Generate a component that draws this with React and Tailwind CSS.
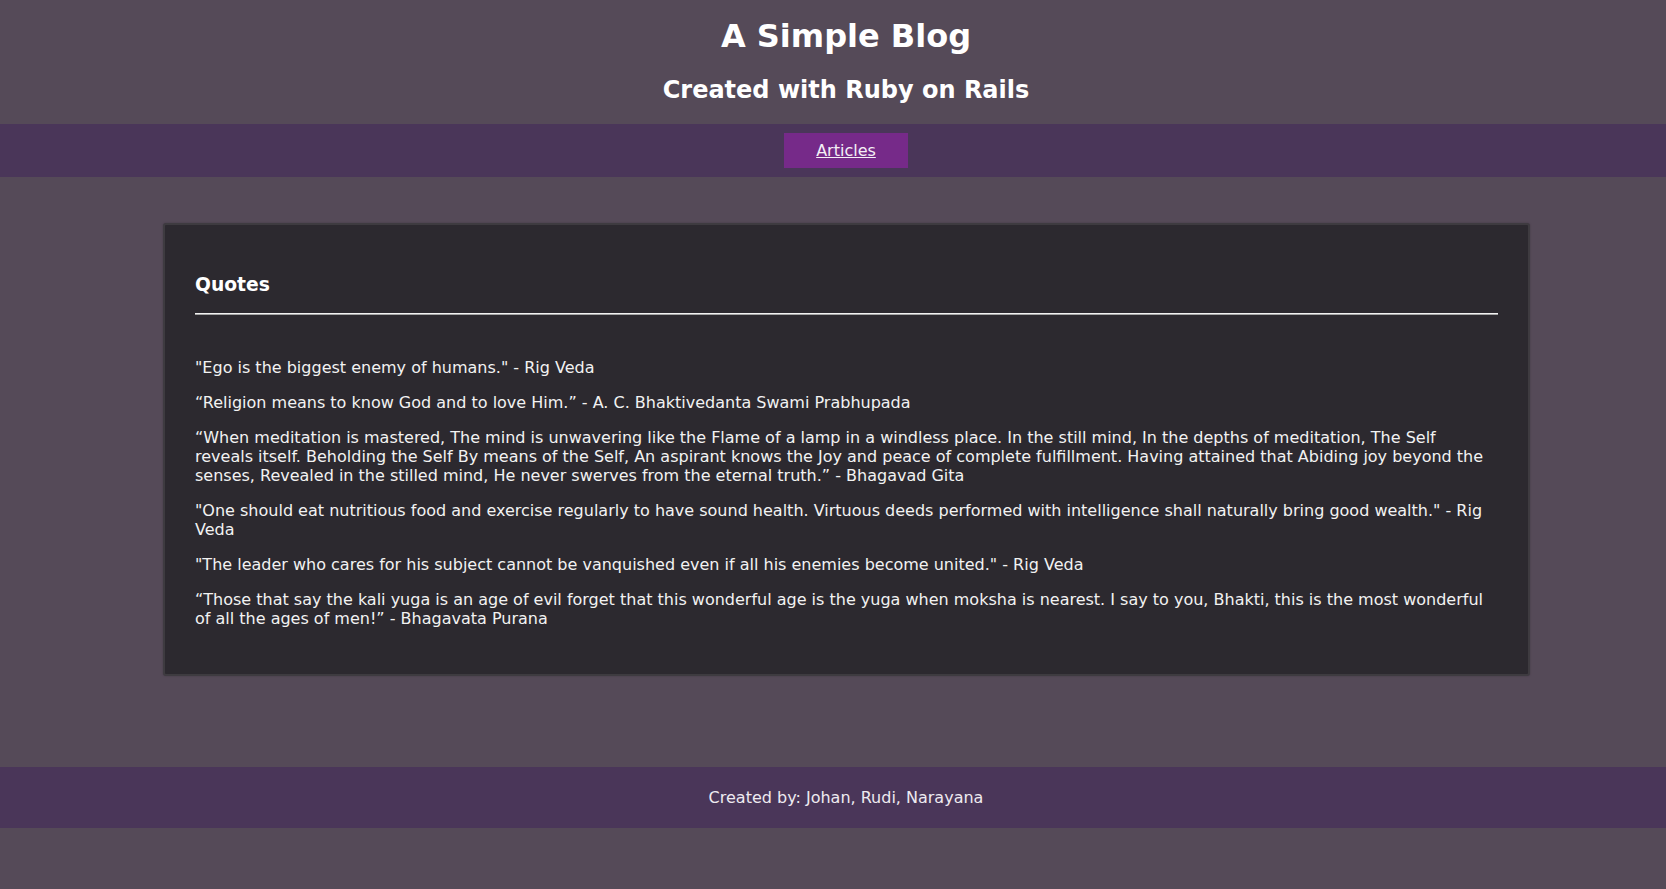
const quotes = [
  '"Ego is the biggest enemy of humans." - Rig Veda',
  '“Religion means to know God and to love Him.” - A. C. Bhaktivedanta Swami Prabhupada',
  '“When meditation is mastered, The mind is unwavering like the Flame of a lamp in a windless place. In the still mind, In the depths of meditation, The Self reveals itself. Beholding the Self By means of the Self, An aspirant knows the Joy and peace of complete fulfillment. Having attained that Abiding joy beyond the senses, Revealed in the stilled mind, He never swerves from the eternal truth.” - Bhagavad Gita',
  '"One should eat nutritious food and exercise regularly to have sound health. Virtuous deeds performed with intelligence shall naturally bring good wealth." - Rig Veda',
  '"The leader who cares for his subject cannot be vanquished even if all his enemies become united." - Rig Veda',
  '“Those that say the kali yuga is an age of evil forget that this wonderful age is the yuga when moksha is nearest. I say to you, Bhakti, this is the most wonderful of all the ages of men!” - Bhagavata Purana',
];

export default function App() {
  return (
    <div className="min-h-screen w-full overflow-hidden bg-[#554a58] text-white font-['DejaVu_Sans',sans-serif] leading-[normal]">
      <div className="w-[1692px]">
        {/* Header */}
        <header className="pt-[17px] pb-[20px] text-center">
          <h1 className="text-[32px] font-bold leading-[normal]">A Simple Blog</h1>
          <h2 className="mt-[21px] text-[24px] font-bold leading-[normal]">Created with Ruby on Rails</h2>
        </header>

        {/* Nav */}
        <nav className="flex justify-center bg-[#4a3659] py-[9px]">
          <a href="#" className="bg-[#762a89] px-8 py-2 text-base leading-[19px] text-[#f4f0f6] underline">
            Articles
          </a>
        </nav>

        {/* Quotes card */}
        <main className="mt-[46px]">
          <div className="ml-[163px] w-[1367px] rounded-[3px] border-2 border-[#3e3b40] bg-[#2c292f] px-[30px] pt-[49px] pb-[46px] shadow-[0_0_2px_rgba(0,0,0,0.25)]">
            <h3 className="text-[18.72px] font-bold leading-[normal]">Quotes</h3>
            <div className="mt-[18px] border-t border-b border-t-[#f2f2f2] border-b-[#a5a5a5]" />
            <div className="mt-[43px] space-y-4 text-base leading-[normal] text-[#f2f2f2]">
              {quotes.map((q, i) => (
                <p key={i}>{q}</p>
              ))}
            </div>
          </div>
        </main>

        {/* Footer */}
        <footer className="mt-[91px] bg-[#4a3659] py-[21px] text-center text-base leading-[normal] text-[#eeeaf0]">
          Created by: Johan, Rudi, Narayana
        </footer>
      </div>
    </div>
  );
}
